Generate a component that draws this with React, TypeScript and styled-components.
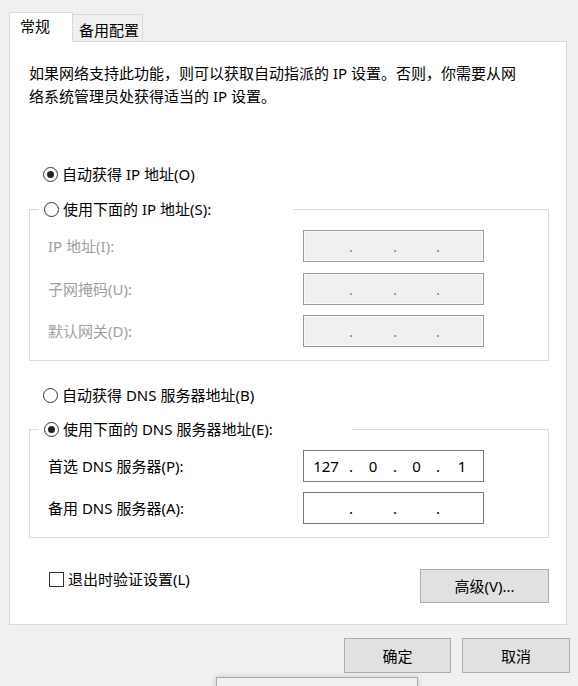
import React from "react";
import styled, { createGlobalStyle } from "styled-components";

const Global = createGlobalStyle`
  html, body { margin: 0; padding: 0; background: #f0f0f0; }
  body {
    font-family: "Noto Sans", "Noto Sans CJK SC", sans-serif;
    font-size: 15px;
    color: #000;
  }
  * { box-sizing: border-box; }
`;

const Window = styled.div`
  position: relative;
  width: 578px;
  height: 686px;
  overflow: hidden;
  padding: 12px 8px 0 9px;
  display: flex;
  flex-direction: column;
`;

const TabStrip = styled.div`
  display: flex;
  align-items: flex-end;
  height: 29px;
  margin-right: 3px;
`;

const Tab = styled.div<{ $active?: boolean; $w: number }>`
  width: ${(p) => p.$w}px;
  height: ${(p) => (p.$active ? 30 : 27)}px;
  margin-bottom: ${(p) => (p.$active ? -1 : 0)}px;
  padding: ${(p) => (p.$active ? "3px 0 0 10px" : "5px 0 0 6px")};
  line-height: 20px;
  white-space: nowrap;
  background: ${(p) => (p.$active ? "#fff" : "#f0f0f0")};
  border: 1px solid #d9d9d9;
  border-bottom: none;
  ${(p) => (p.$active ? "" : "border-left: none;")}
  position: relative;
  z-index: ${(p) => (p.$active ? 1 : 0)};
`;

const Panel = styled.div`
  margin-right: 3px;
  background: #fff;
  border: 1px solid #d9d9d9;
  padding: 20px 17px 21px 19px;
  display: flex;
  flex-direction: column;
`;

const Description = styled.p`
  margin: 0;
  line-height: 23px;
  white-space: nowrap;
`;

const RadioRow = styled.label<{ $mt: number }>`
  display: flex;
  align-items: center;
  gap: 4px;
  height: 20px;
  line-height: 20px;
  margin: ${(p) => p.$mt}px 0 0 14px;
  white-space: nowrap;
`;

const RadioCircle = styled.span<{ $checked?: boolean }>`
  width: 15px;
  height: 15px;
  border-radius: 50%;
  border: 1px solid #333;
  background: #fff;
  display: flex;
  align-items: center;
  justify-content: center;
  flex: none;
  &::after {
    content: "";
    width: 7px;
    height: 7px;
    border-radius: 50%;
    background: ${(p) => (p.$checked ? "#222" : "transparent")};
  }
`;

const Group = styled.fieldset<{ $mt: number }>`
  margin: ${(p) => p.$mt}px 0 0 0;
  min-width: 0;
  border: 1px solid #dcdcdc;
  padding: 11px 0 13px 0;
`;

const Legend = styled.legend<{ $w: number }>`
  margin-left: 9px;
  padding: 0 0 0 5px;
  width: ${(p) => p.$w}px;
  height: 20px;
  line-height: 20px;
  display: flex;
  align-items: center;
  gap: 4px;
  white-space: nowrap;
  background: #fff;
`;

const FieldGrid = styled.div<{ $gap: number }>`
  display: grid;
  grid-template-columns: 255px 181px;
  row-gap: ${(p) => p.$gap}px;
  padding-left: 18px;
  align-items: center;
`;

const FieldLabel = styled.span<{ $disabled?: boolean }>`
  color: ${(p) => (p.$disabled ? "#a0a0a0" : "#000")};
  line-height: 20px;
  white-space: nowrap;
`;

const IpBox = styled.div<{ $disabled?: boolean }>`
  height: 32px;
  border: 1px solid ${(p) => (p.$disabled ? "#9a9a9a" : "#7a7a7a")};
  box-shadow: ${(p) => (p.$disabled ? "inset 0 0 0 1px #fafafa" : "none")};
  background: ${(p) => (p.$disabled ? "#f0f0f0" : "#fff")};
  display: grid;
  grid-template-columns: 44px 6px 38px 6px 37px 6px 1fr;
  align-items: center;
  line-height: 20px;
  color: ${(p) => (p.$disabled ? "#7d8590" : "#000")};
`;

const Seg = styled.span`
  text-align: center;
`;

const Dot = styled.span`
  text-align: center;
`;

const BottomRow = styled.div`
  margin-top: 31px;
  display: flex;
  justify-content: space-between;
  align-items: flex-start;
`;

const CheckRow = styled.label`
  display: flex;
  align-items: center;
  gap: 4px;
  margin-left: 20px;
  line-height: 20px;
  height: 20px;
  white-space: nowrap;
`;

const CheckBox = styled.span`
  width: 15px;
  height: 15px;
  border: 1px solid #333;
  background: #fff;
  flex: none;
`;

const Button = styled.button<{ $w: number; $h: number }>`
  width: ${(p) => p.$w}px;
  height: ${(p) => p.$h}px;
  background: #e1e1e1;
  border: 1px solid #adadad;
  font: inherit;
  color: #000;
  line-height: 20px;
  padding: 0;
  white-space: nowrap;
`;

const Footer = styled.div`
  margin-top: 13px;
  display: flex;
  justify-content: flex-end;
  gap: 11px;
`;

const OverlayWindow = styled.div`
  position: absolute;
  left: 216px;
  top: 677px;
  width: 202px;
  height: 40px;
  background: #f0f0f0;
  border: 1px solid #a9a9a9;
  box-shadow: 0 0 6px rgba(0, 0, 0, 0.18);
`;

const IpField: React.FC<{ parts?: string[]; disabled?: boolean }> = ({ parts = ["", "", "", ""], disabled }) => (
  <IpBox $disabled={disabled}>
    <Seg>{parts[0]}</Seg>
    <Dot>.</Dot>
    <Seg>{parts[1]}</Seg>
    <Dot>.</Dot>
    <Seg>{parts[2]}</Seg>
    <Dot>.</Dot>
    <Seg>{parts[3]}</Seg>
  </IpBox>
);

export default function App() {
  return (
    <>
      <Global />
      <Window>
        <TabStrip>
          <Tab $active $w={64}>常规</Tab>
          <Tab $w={70}>备用配置</Tab>
        </TabStrip>
        <Panel>
          <Description>
            如果网络支持此功能，则可以获取自动指派的 IP 设置。否则，你需要从网
            <br />
            络系统管理员处获得适当的 IP 设置。
          </Description>

          <RadioRow $mt={56}>
            <RadioCircle $checked />
            自动获得 IP 地址(O)
          </RadioRow>

          <Group $mt={15}>
            <Legend $w={254}>
              <RadioCircle />
              使用下面的 IP 地址(S):
            </Legend>
            <FieldGrid $gap={10.5}>
              <FieldLabel $disabled>IP 地址(I):</FieldLabel>
              <IpField disabled />
              <FieldLabel $disabled>子网掩码(U):</FieldLabel>
              <IpField disabled />
              <FieldLabel $disabled>默认网关(D):</FieldLabel>
              <IpField disabled />
            </FieldGrid>
          </Group>

          <RadioRow $mt={24}>
            <RadioCircle />
            自动获得 DNS 服务器地址(B)
          </RadioRow>

          <Group $mt={14}>
            <Legend $w={313}>
              <RadioCircle $checked />
              使用下面的 DNS 服务器地址(E):
            </Legend>
            <FieldGrid $gap={10}>
              <FieldLabel>首选 DNS 服务器(P):</FieldLabel>
              <IpField parts={["127", "0", "0", "1"]} />
              <FieldLabel>备用 DNS 服务器(A):</FieldLabel>
              <IpField />
            </FieldGrid>
          </Group>

          <BottomRow>
            <CheckRow>
              <CheckBox />
              退出时验证设置(L)
            </CheckRow>
            <Button $w={129} $h={34}>高级(V)...</Button>
          </BottomRow>
        </Panel>
        <Footer>
          <Button $w={107} $h={35}>确定</Button>
          <Button $w={108} $h={35}>取消</Button>
        </Footer>
        <OverlayWindow />
      </Window>
    </>
  );
}
